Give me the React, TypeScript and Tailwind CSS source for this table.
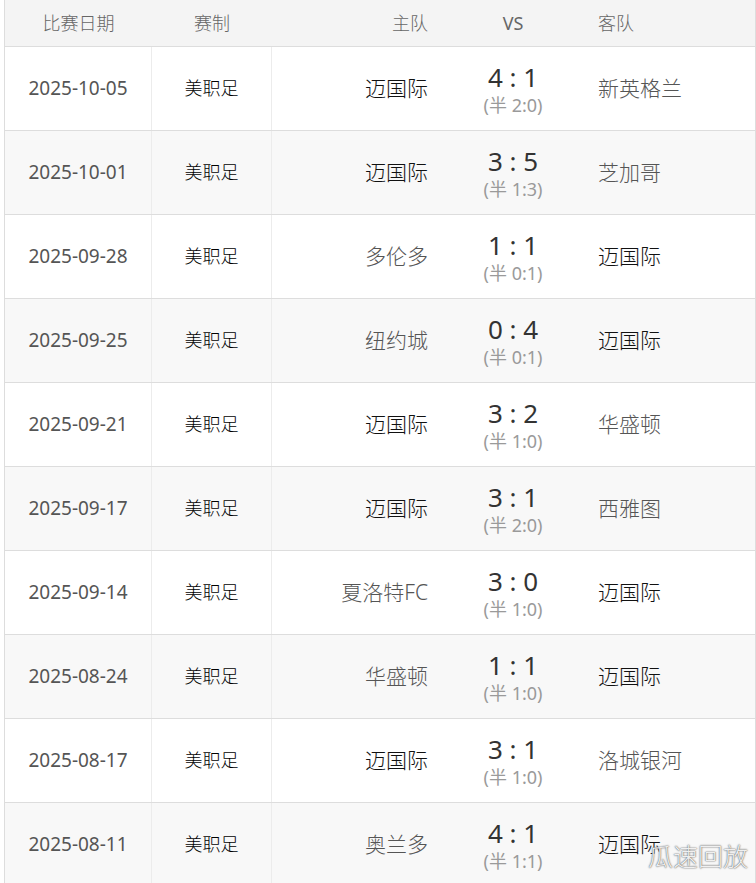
const matches = [
  { date: "2025-10-05", home: "迈国际", score: "4 : 1", half: "(半 2:0)", away: "新英格兰" },
  { date: "2025-10-01", home: "迈国际", score: "3 : 5", half: "(半 1:3)", away: "芝加哥" },
  { date: "2025-09-28", home: "多伦多", score: "1 : 1", half: "(半 0:1)", away: "迈国际" },
  { date: "2025-09-25", home: "纽约城", score: "0 : 4", half: "(半 0:1)", away: "迈国际" },
  { date: "2025-09-21", home: "迈国际", score: "3 : 2", half: "(半 1:0)", away: "华盛顿" },
  { date: "2025-09-17", home: "迈国际", score: "3 : 1", half: "(半 2:0)", away: "西雅图" },
  { date: "2025-09-14", home: "夏洛特FC", score: "3 : 0", half: "(半 1:0)", away: "迈国际" },
  { date: "2025-08-24", home: "华盛顿", score: "1 : 1", half: "(半 1:0)", away: "迈国际" },
  { date: "2025-08-17", home: "迈国际", score: "3 : 1", half: "(半 1:0)", away: "洛城银河" },
  { date: "2025-08-11", home: "奥兰多", score: "4 : 1", half: "(半 1:1)", away: "迈国际" },
];

function teamColor(name: string) {
  return name === "迈国际" ? "text-[#111]" : "text-[#555]";
}

export default function App() {
  return (
    <div className="relative h-[883px] overflow-hidden bg-white pl-1 font-['Noto_Sans','Noto_Sans_CJK_SC',sans-serif] text-[18px] font-light">
      <div className="border-l border-r border-[#ddd]">
        <div className="flex h-[47px] items-center border-b border-[#ddd] bg-[#f4f4f4] text-[#666]">
          <div className="w-[147px] text-center">比赛日期</div>
          <div className="w-[120px] text-center">赛制</div>
          <div className="w-[166px] pr-[10px] text-right">主队</div>
          <div className="w-[150px] text-center font-normal">VS</div>
          <div className="flex-1 pl-[10px]">客队</div>
        </div>
        {matches.map((m, i) => (
          <div
            key={m.date}
            className={`flex h-[84px] border-b border-[#ddd] ${i % 2 === 1 ? "bg-[#f8f8f8]" : "bg-white"}`}
          >
            <div className="flex w-[147px] items-center justify-center border-r border-[#ececec] text-[19px] font-normal text-[#555]">
              {m.date}
            </div>
            <div className="flex w-[120px] items-center justify-center border-r border-[#ececec] text-black">
              美职足
            </div>
            <div className={`flex w-[166px] items-center justify-end pr-[10px] text-[21px] ${teamColor(m.home)}`}>
              {m.home}
            </div>
            <div className="flex w-[150px] flex-col items-center justify-center font-normal">
              <div className="text-[26px] leading-[32px] text-[#333]">{m.score}</div>
              <div className="text-[18px] leading-[24px] text-[#9a9a9a]">{m.half}</div>
            </div>
            <div className={`flex flex-1 items-center pl-[10px] text-[21px] ${teamColor(m.away)}`}>
              {m.away}
            </div>
          </div>
        ))}
      </div>
      <div className="absolute left-[648px] top-[838px] text-[25px] text-white/90 [text-shadow:0_0_1px_#555,0_0_2px_#777]">
        瓜速回放
      </div>
    </div>
  );
}
